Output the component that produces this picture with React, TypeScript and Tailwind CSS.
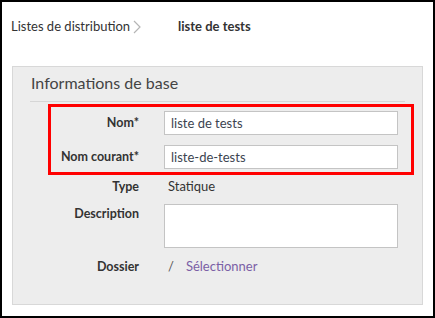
import React from 'react';

const labelCls = 'w-[88px] shrink-0 text-right text-[12.5px] font-bold text-[#333]';

function Row({ label, children, top = false, className = '' }: { label: string; children: React.ReactNode; top?: boolean; className?: string }) {
  return (
    <div className={`flex gap-[25px] ${top ? 'items-start' : 'items-center'} ${className}`}>
      <div className={`${labelCls} ${top ? 'leading-[20px]' : ''}`}>{label}</div>
      {children}
    </div>
  );
}

export default function App() {
  return (
    <div className="w-[435px] h-[318px] border-2 border-black bg-white flex flex-col" style={{ fontFamily: 'Lato, "Noto Sans", sans-serif' }}>
      <div className="flex items-center h-[20px] mt-[15px] pl-[9px] text-[13px] text-[#333]">
        <span>Listes de distribution</span>
        <svg width="8" height="14" viewBox="0 0 8 14" className="ml-[3px]">
          <path d="M1 1 L7 7 L1 13" fill="none" stroke="#b5b5b5" strokeWidth="1.2" />
        </svg>
        <span className="ml-[37px] font-bold">liste de tests</span>
      </div>

      <div className="mx-[10px] mt-[29px] h-[239px] border border-[#d8d8d8] bg-[#ededed]">
        <div className="mx-[17px] pt-[6px]">
          <div className="pl-[1px] pb-[8px] text-[16px] leading-[20px] text-[#444] border-b border-[#d6d6d6]">
            Informations de base
          </div>
        </div>

        <div className="ml-[35px] mt-[2px] w-[366px] border-[3px] border-[#ff0000] pt-[4px] pb-[3px] flex flex-col gap-[10px]">
          <Row label="Nom*">
            <input
              readOnly
              value="liste de tests"
              className="w-[234px] h-[24px] border border-[#c4c4c4] bg-white px-[6px] text-[13px] text-[#3c4450] outline-none"
            />
          </Row>
          <Row label="Nom courant*">
            <input
              readOnly
              value="liste-de-tests"
              className="w-[234px] h-[24px] border border-[#c4c4c4] bg-white px-[6px] text-[13px] text-[#3c4450] outline-none"
            />
          </Row>
        </div>

        <div className="ml-[38px] flex flex-col">
          <Row label="Type" className="h-[24px]">
            <span className="pl-[4px] text-[13px] text-[#333]">Statique</span>
          </Row>
          <Row label="Description" top className="mt-[5px]">
            <textarea readOnly className="w-[234px] h-[44px] border border-[#c4c4c4] bg-white resize-none outline-none" />
          </Row>
          <Row label="Dossier" className="h-[24px] mt-[7px]">
            <span className="pl-[4px] text-[13px] text-[#555]">/</span>
            <span className="-ml-[13px] text-[13px] text-[#7b5fa6]">Sélectionner</span>
          </Row>
        </div>
      </div>
    </div>
  );
}
